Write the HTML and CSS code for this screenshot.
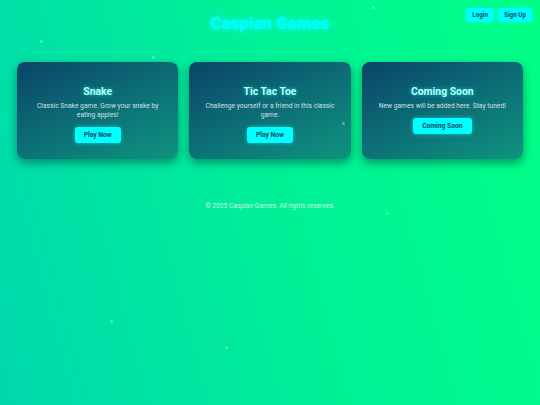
FILE: index.html
```html
<!DOCTYPE html>
<html lang="en">
<head>
<meta charset="utf-8">
<title>Caspian Games</title>
<link rel="stylesheet" href="styles.css">
</head>
<body>
<header class="header">
  <div class="spacer"></div>
  <h1 class="logo">Caspian Games</h1>
  <nav class="auth">
    <button class="btn btn-small">Login</button>
    <button class="btn btn-small">Sign Up</button>
  </nav>
</header>
<main class="games">
  <div class="card">
    <h2 class="card-title">Snake</h2>
    <p class="card-text">Classic Snake game. Grow your snake by eating apples!</p>
    <button class="btn btn-play">Play Now</button>
  </div>
  <div class="card">
    <h2 class="card-title">Tic Tac Toe</h2>
    <p class="card-text">Challenge yourself or a friend in this classic game.</p>
    <button class="btn btn-play">Play Now</button>
  </div>
  <div class="card">
    <h2 class="card-title">Coming Soon</h2>
    <p class="card-text">New games will be added here. Stay tuned!</p>
    <button class="btn btn-play">Coming Soon</button>
  </div>
</main>
<footer class="footer">© 2025 Caspian Games. All rights reserved.</footer>
<span class="dot" style="left:372px;top:6px"></span>
<span class="dot" style="left:152px;top:56px"></span>
<span class="dot" style="left:40px;top:40px"></span>
<span class="dot" style="left:110px;top:320px"></span>
<span class="dot" style="left:225px;top:346px"></span>
<span class="dot" style="left:386px;top:212px"></span>
<span class="dot" style="left:342px;top:122px"></span>
</body>
</html>
```
FILE: styles.css
```css
html, body {
  margin: 0;
  padding: 0;
}
body {
  width: 540px;
  height: 405px;
  overflow: hidden;
  position: relative;
  font-family: Roboto, "Liberation Sans", sans-serif;
  background: linear-gradient(75deg, #00d8ae 0%, #00ef98 50%, #00ff86 100%);
}
.header {
  display: grid;
  grid-template-columns: 1fr auto 1fr;
  align-items: start;
  padding: 8px 8px 0 8px;
  height: 54px;
  box-sizing: border-box;
}
.logo {
  margin: 4px 0 0;
  font-size: 17px;
  font-weight: 700;
  color: #00ffff;
  text-shadow: 0 0 4px #00ffff, 0 0 8px rgba(0, 255, 255, 0.6);
  line-height: 22px;
}
.auth {
  justify-self: end;
  display: flex;
  gap: 4px;
}
.btn {
  font-family: Roboto, "Liberation Sans", sans-serif;
  background: #00ffff;
  color: #0b4a66;
  border: none;
  font-weight: 700;
  cursor: pointer;
  box-shadow: 0 0 4px rgba(0, 255, 255, 0.6);
}
.btn-small {
  height: 14px;
  padding: 0 6px;
  font-size: 6.3px;
  border-radius: 3px;
}
.games {
  display: grid;
  grid-template-columns: repeat(3, 1fr);
  gap: 11px;
  padding: 8px 17px 0;
}
.card {
  height: 97px;
  box-sizing: border-box;
  padding: 23px 12px 0;
  border-radius: 8px;
  background: linear-gradient(155deg, #0a4468 0%, #0c6e76 50%, #0f947f 100%);
  box-shadow: 0 4px 10px rgba(0, 40, 50, 0.45);
  display: flex;
  flex-direction: column;
  align-items: center;
  text-align: center;
}
.card-title {
  margin: 0;
  font-size: 10.4px;
  font-weight: 700;
  line-height: 13px;
  color: #b9fff6;
  text-shadow: 0 0 4px rgba(0, 255, 255, 0.7);
}
.card-text {
  margin: 4px 0 6px;
  font-size: 6.7px;
  line-height: 9px;
  color: #cfe0e3;
}
.btn-play {
  height: 16px;
  padding: 0 9px;
  font-size: 6.7px;
  border-radius: 3px;
  margin-top: 1px;
}
.footer {
  margin-top: 43px;
  text-align: center;
  font-size: 6.7px;
  color: #c8f5e4;
}
.dot {
  position: absolute;
  width: 3px;
  height: 3px;
  border-radius: 50%;
  background: rgba(160, 255, 230, 0.45);
}
```
